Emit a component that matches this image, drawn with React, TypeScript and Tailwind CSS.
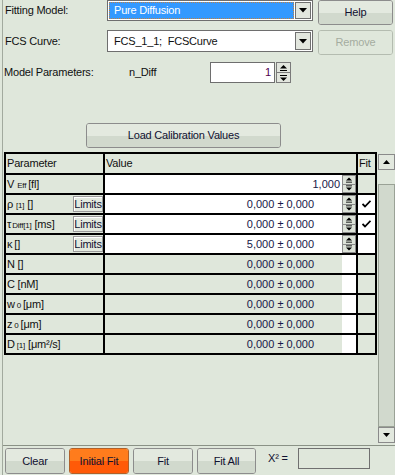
import React from "react";

const Up = ({ w = 7 }: { w?: number }) => (
  <svg width={w} height="6" viewBox="0 0 7 6">
    <polygon points="0,3.5 7,3.5 3.5,0" fill="#000" />
    <rect x="0" y="5" width="7" height="1" fill="#000" />
  </svg>
);
const Down = ({ w = 7 }: { w?: number }) => (
  <svg width={w} height="6" viewBox="0 0 7 6">
    <rect x="0" y="0" width="7" height="1" fill="#000" />
    <polygon points="0,2.5 7,2.5 3.5,6" fill="#000" />
  </svg>
);
const DropTri = () => (
  <svg width="8" height="5" viewBox="0 0 8 5">
    <polygon points="0,0 8,0 4,4.5" fill="#000" />
  </svg>
);
const Check = () => (
  <svg width="9" height="8" viewBox="0 0 9 8">
    <path d="M0.5 4 L3 6.5 L8.5 0.8" stroke="#000" strokeWidth="1.8" fill="none" />
  </svg>
);

const Btn = ({
  label,
  w,
  h,
  orange,
  disabled,
}: {
  label: string;
  w: string;
  h: string;
  orange?: boolean;
  disabled?: boolean;
}) => (
  <div
    className={`${w} ${h} rounded-[3px] border flex flex-col overflow-hidden relative ${
      disabled
        ? "border-[#b4bcb0]"
        : orange
        ? "border-[#b0602a]"
        : "border-[#8c8c8c]"
    }`}
  >
    <div
      className={`flex-1 ${
        disabled ? "bg-[#dfe7db]" : orange ? "bg-[#ff7c1c]" : "bg-[#e3e9df]"
      }`}
    />
    <div
      className={`flex-1 ${
        disabled ? "bg-[#dfe7db]" : orange ? "bg-[#ff5a08]" : "bg-[#d1d9cd]"
      }`}
    />
    <div
      className={`absolute inset-0 flex items-center justify-center ${
        disabled ? "text-[#a4aca0]" : "text-[#101030]"
      }`}
    >
      {label}
    </div>
  </div>
);

const SpinBtns = ({ h }: { h: string }) => (
  <div className={`flex flex-col w-[14px] ${h}`}>
    <div className="flex-1 border border-[#8a8a8a] bg-[#dde3d9] flex items-center justify-center">
      <Up w={6} />
    </div>
    <div className="flex-1 border border-[#8a8a8a] border-t-0 bg-[#dde3d9] flex items-center justify-center">
      <Down w={6} />
    </div>
  </div>
);

const Limits = () => (
  <div className="w-[30px] h-[16px] border border-[#9a9a9a] bg-[#e3e9df] flex items-center justify-center text-[11px] text-[#101030] shadow-[inset_1px_1px_0_#fff]">
    Limits
  </div>
);

type Row = {
  label: React.ReactNode;
  limits?: boolean;
  editable?: boolean;
  value: string;
  fit?: "check" | "white" | "none";
};

const rows: Row[] = [
  {
    label: (
      <>
        V<span className="text-[8px] ml-[3px]">Eff</span>
        <span className="ml-[2px]">[fl]</span>
      </>
    ),
    editable: true,
    value: "1,000",
    fit: "none",
  },
  {
    label: (
      <>
        ρ<span className="text-[8px] ml-[3px]">[1]</span>
        <span className="ml-[3px]">[]</span>
      </>
    ),
    limits: true,
    editable: true,
    value: "0,000 ± 0,000",
    fit: "check",
  },
  {
    label: (
      <>
        τ<span className="text-[8px] ml-[1px]">Diff[1]</span>
        <span className="ml-[3px]">[ms]</span>
      </>
    ),
    limits: true,
    editable: true,
    value: "0,000 ± 0,000",
    fit: "check",
  },
  {
    label: (
      <>
        κ<span className="ml-[2px]">[]</span>
      </>
    ),
    limits: true,
    editable: true,
    value: "5,000 ± 0,000",
    fit: "white",
  },
  { label: <>N []</>, value: "0,000 ± 0,000", fit: "none" },
  { label: <>C [nM]</>, value: "0,000 ± 0,000", fit: "none" },
  {
    label: (
      <>
        w<span className="text-[8px] ml-[2px]">0</span>
        <span className="ml-[2px]">[μm]</span>
      </>
    ),
    value: "0,000 ± 0,000",
    fit: "none",
  },
  {
    label: (
      <>
        z<span className="text-[8px] ml-[2px]">0</span>
        <span className="ml-[2px]">[μm]</span>
      </>
    ),
    value: "0,000 ± 0,000",
    fit: "none",
  },
  {
    label: (
      <>
        D<span className="text-[8px] ml-[2px]">[1]</span>
        <span className="ml-[3px]">[μm²/s]</span>
      </>
    ),
    value: "0,000 ± 0,000",
    fit: "none",
  },
];

export default function App() {
  return (
    <div className="w-[395px] h-[475px] bg-[#dfe7db] overflow-hidden pl-[2px] font-['Liberation_Sans',Arial,sans-serif] text-[11px] text-[#101010] tracking-[-0.2px]">
      <div className="h-full border-l border-[#a2aa9e] flex flex-col">
        {/* Row 1 */}
        <div className="flex items-start h-[25px]">
          <div className="w-[104px] pl-[2px] h-[21px] flex items-center">Fitting Model:</div>
          <div className="w-[206px] h-[21px] border border-[#6e6e6e] bg-white flex items-center p-[1px]">
            <div className="flex-1 h-full bg-[#3399ff] border border-dotted border-[#c08040] text-white flex items-center pl-[4px]">
              Pure Diffusion
            </div>
            <div className="w-[16px] h-full ml-[1px] border border-[#707070] bg-[#e2e6de] flex items-center justify-center">
              <DropTri />
            </div>
          </div>
          <div className="ml-[5px]">
            <Btn label="Help" w="w-[75px]" h="h-[25px]" />
          </div>
        </div>
        {/* Row 2 */}
        <div className="flex items-start h-[25px] mt-[5px]">
          <div className="w-[104px] pl-[2px] h-[22px] flex items-center">FCS Curve:</div>
          <div className="w-[206px] h-[22px] border border-[#6e6e6e] bg-white flex items-center p-[1px]">
            <div className="flex-1 h-full flex items-center pl-[5px] whitespace-pre">FCS_1_1;  FCSCurve</div>
            <div className="w-[16px] h-full ml-[1px] border border-[#707070] bg-[#e2e6de] flex items-center justify-center">
              <DropTri />
            </div>
          </div>
          <div className="ml-[5px]">
            <Btn label="Remove" w="w-[75px]" h="h-[25px]" disabled />
          </div>
        </div>
        {/* Row 3 */}
        <div className="flex items-center h-[21px] mt-[7px]">
          <div className="w-[126px] pl-[1px]">Model Parameters:</div>
          <div className="w-[81px]">n_Diff</div>
          <div className="w-[65px] h-[21px] border border-[#6e6e6e] bg-white flex items-center justify-end pr-[3px] text-[#500050]">
            1
          </div>
          <div className="ml-[1px]">
            <div className="flex flex-col w-[15px] h-[21px]">
              <div className="flex-1 border border-[#7a7a7a] bg-[#e2e6de] flex items-center justify-center">
                <Up />
              </div>
              <div className="flex-1 border border-[#7a7a7a] border-t-0 bg-[#e2e6de] flex items-center justify-center">
                <Down />
              </div>
            </div>
          </div>
        </div>
        {/* Load button */}
        <div className="mt-[40px] pl-[83px]">
          <Btn label="Load Calibration Values" w="w-[195px]" h="h-[25px]" />
        </div>
        {/* Grid */}
        <div className="mt-[4px] h-[294px] border-b border-[#8a9286] flex">
          <div className="w-[373px] ml-[1px] flex flex-col">
            <div className="flex border-l-2 border-t-2 border-b-2 border-black h-[23px]">
              <div className="w-[99px] border-r-2 border-black flex items-center pl-[1px]">Parameter</div>
              <div className="w-[253px] border-r-2 border-black flex items-center pl-[1px]">Value</div>
              <div className="w-[19px] border-r-2 border-black flex items-center pl-[1px]">Fit</div>
            </div>
            {rows.map((r, i) => (
              <div key={i} className="flex border-l-2 border-b-2 border-black h-[20px]">
                <div className="w-[99px] border-r-2 border-black flex items-center justify-between pl-[1px]">
                  <span className="flex items-baseline whitespace-pre">{r.label}</span>
                  {r.limits && <Limits />}
                </div>
                <div className={`w-[253px] border-r-2 border-black flex ${r.editable ? "bg-white" : ""}`}>
                  <div
                    className={`flex-1 flex items-center justify-end text-[#181848] tracking-[0px] ${
                      r.value === "1,000" ? "pr-[2px]" : "pr-[28px]"
                    }`}
                  >
                    {r.value}
                  </div>
                  {r.editable ? <SpinBtns h="h-[18px]" /> : <div className="w-[14px] bg-white" />}
                </div>
                <div
                  className={`w-[19px] border-r-2 border-black flex items-center justify-center ${
                    r.fit === "check" || r.fit === "white" ? "bg-white" : ""
                  }`}
                >
                  {r.fit === "check" && <Check />}
                </div>
              </div>
            ))}
          </div>
          {/* Scrollbar */}
          <div className="w-[17px] ml-[1px] flex flex-col pt-[2px] pb-[2px]">
            <div className="h-[16px] border border-[#8a8a8a] bg-[#e2e8de] flex items-center justify-center">
              <svg width="7" height="4" viewBox="0 0 7 4">
                <polygon points="0,4 7,4 3.5,0" fill="#000" />
              </svg>
            </div>
            <div className="h-[14px]" />
            <div className="flex-1 border border-[#9aa296] bg-[#d1d9cd]" />
            <div className="h-[16px] border border-[#8a8a8a] bg-[#e2e8de] flex items-center justify-center">
              <svg width="7" height="4" viewBox="0 0 7 4">
                <polygon points="0,0 7,0 3.5,4" fill="#000" />
              </svg>
            </div>
          </div>
        </div>
        {/* Bottom */}
        <div className="flex items-start mt-[2px] pl-[2px]">
          <Btn label="Clear" w="w-[60px]" h="h-[26px]" />
          <div className="ml-[4px]">
            <Btn label="Initial Fit" w="w-[60px]" h="h-[26px]" orange />
          </div>
          <div className="ml-[4px]">
            <Btn label="Fit" w="w-[60px]" h="h-[26px]" />
          </div>
          <div className="ml-[4px]">
            <Btn label="Fit All" w="w-[59px]" h="h-[26px]" />
          </div>
          <div className="ml-[12px] w-[30px] h-[21px] flex items-center text-[#101030]">X² =</div>
          <div className="w-[72px] h-[21px] border border-[#707070]" />
        </div>
      </div>
    </div>
  );
}
